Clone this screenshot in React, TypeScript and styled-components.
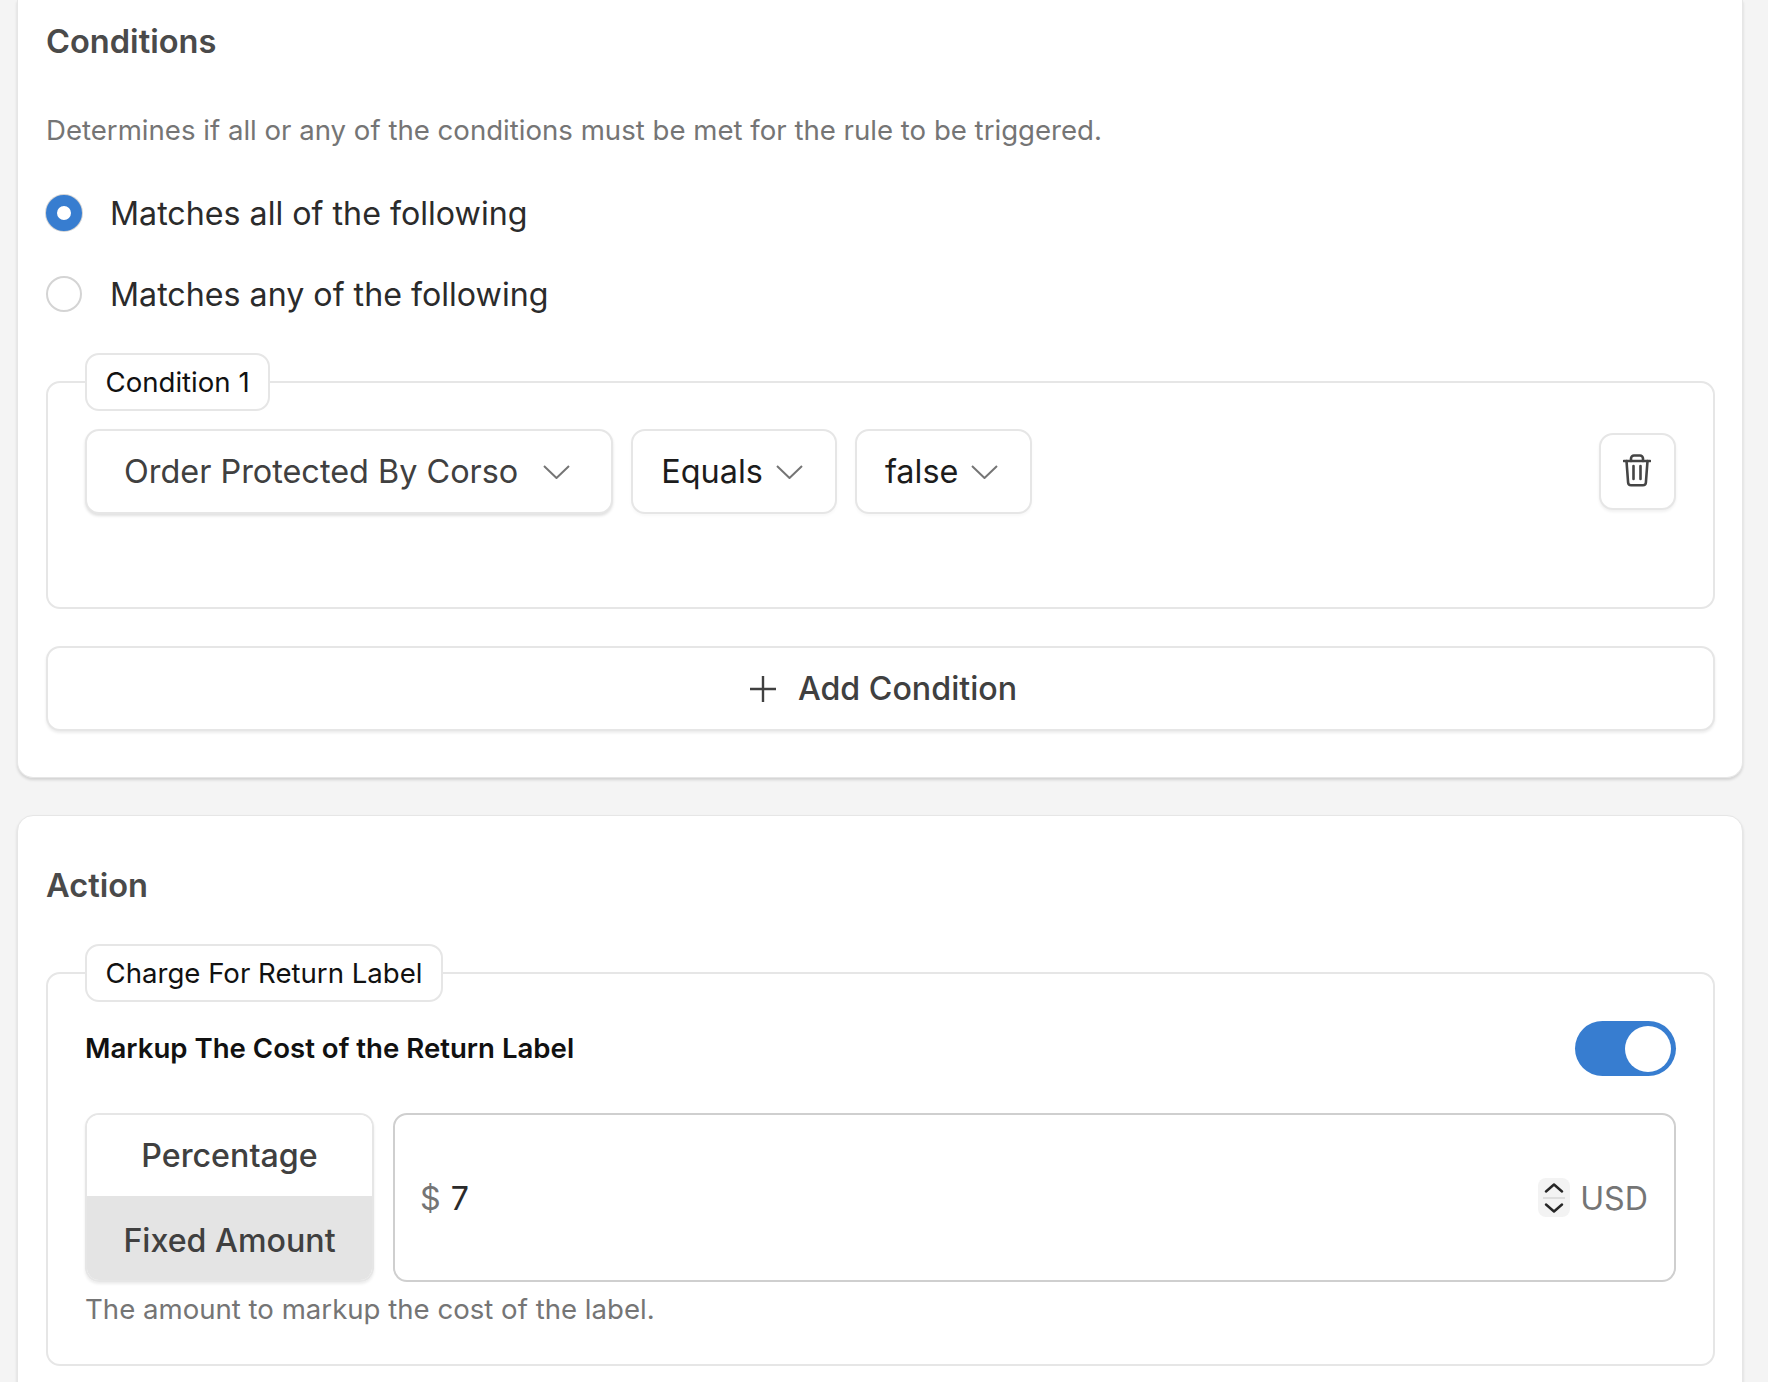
import React from "react";
import styled, { createGlobalStyle } from "styled-components";

const GlobalStyle = createGlobalStyle`
	html,
	body {
		margin: 0;
		height: 1382px;
		overflow: hidden;
		background: #f4f4f4;
		font-family: Inter, "Liberation Sans", sans-serif;
		-webkit-font-smoothing: antialiased;
	}
`;

const Page = styled.div`
	display: flex;
	flex-direction: column;
	gap: 37px;
	height: 1382px;
	padding: 0 25px 0 17px;
	box-sizing: border-box;
	overflow: hidden;
`;

const Card = styled.section<{ $cutTop?: boolean }>`
	flex: none;
	display: flex;
	flex-direction: column;
	padding: ${(p) => (p.$cutTop ? "17px" : "45px")} 27px 46px 28px;
	background: #fff;
	border: 1px solid #e6e6e6;
	border-top-width: ${(p) => (p.$cutTop ? 0 : "1px")};
	border-radius: ${(p) => (p.$cutTop ? "0 0 16px 16px" : "16px")};
	box-shadow: 0 2px 3px rgba(0, 0, 0, 0.14);
`;

const Heading = styled.h2`
	margin: 0;
	font-size: 32.6px;
	line-height: 48px;
	font-weight: 600;
	color: #4a4a4a;
`;

const Description = styled.p`
	margin: 45px 0 0;
	font-size: 27.6px;
	line-height: 40px;
	color: #757575;
`;

const RadioGroup = styled.div`
	display: flex;
	flex-direction: column;
	gap: 45px;
	margin: 45px 0 41px;
`;

const RadioRow = styled.label`
	display: flex;
	align-items: center;
	gap: 28px;
	height: 36px;
	font-size: 32.2px;
	color: #2b2b2b;
`;

const RadioDot = styled.span<{ $checked?: boolean }>`
	flex: none;
	width: 36px;
	height: 36px;
	box-sizing: border-box;
	border-radius: 50%;
	background: #fff;
	border: ${(p) => (p.$checked ? "11px solid #377dd0" : "2px solid #d4d4d4")};
	box-shadow: ${(p) => (p.$checked ? "0 0 0 1px #d4d4d4" : "none")};
`;

const Group = styled.fieldset<{ $bottom: number }>`
	margin: 0;
	padding: 0 37px ${(p) => p.$bottom}px 37px;
	min-width: 0;
	border: 2px solid #e6e6e6;
	border-radius: 14px;
`;

const GroupLegend = styled.legend`
	box-sizing: border-box;
	height: 58px;
	padding: 0 18.5px;
	background: #fff;
	border: 2px solid #e6e6e6;
	border-radius: 14px;
	font-size: 27.6px;
	line-height: 54px;
	color: #111;
`;

const ConditionRow = styled.div`
	display: flex;
	align-items: center;
	gap: 18px;
	margin-top: 18px;
`;

const SelectBox = styled.button<{ $wide?: boolean; $strong?: boolean }>`
	display: flex;
	align-items: center;
	gap: ${(p) => (p.$wide ? "25px" : "13px")};
	height: 85px;
	padding: 0 ${(p) => (p.$wide ? "41px" : "32px")} 0 ${(p) => (p.$wide ? "37px" : "28px")};
	background: #fff;
	border: 2px solid #e6e6e6;
	border-radius: 14px;
	box-shadow: 0 2px 3px rgba(0, 0, 0, ${(p) => (p.$wide ? 0.12 : 0.03)});
	font: inherit;
	font-size: 32.4px;
	color: ${(p) => (p.$strong ? "#1c1c1c" : "#404040")};
`;

const TrashButton = styled.button`
	display: flex;
	align-items: center;
	justify-content: center;
	width: 77px;
	height: 77px;
	margin-left: auto;
	padding: 0 2px 2px 0;
	background: #fff;
	border: 2px solid #e6e6e6;
	border-radius: 14px;
	box-shadow: 0 2px 3px rgba(0, 0, 0, 0.06);
`;

const AddButton = styled.button`
	display: flex;
	align-items: center;
	justify-content: center;
	gap: 22px;
	height: 85px;
	margin-top: 37px;
	padding: 0 0 0 6px;
	background: #fff;
	border: 2px solid #e6e6e6;
	border-radius: 14px;
	box-shadow: 0 2px 3px rgba(0, 0, 0, 0.08);
	font: inherit;
	font-size: 32.2px;
	font-weight: 500;
	color: #404040;
`;

const ActionHeading = styled(Heading)`
	margin-bottom: 35px;
`;

const ToggleRow = styled.div`
	display: flex;
	align-items: center;
	justify-content: space-between;
	margin-top: 19px;
`;

const ToggleLabel = styled.span`
	margin-top: -2px;
	font-size: 27.6px;
	font-weight: 600;
	color: #111;
`;

const Switch = styled.span`
	display: flex;
	justify-content: flex-end;
	align-items: center;
	box-sizing: border-box;
	width: 101px;
	height: 55px;
	padding-right: 5px;
	border-radius: 28px;
	background: #377dd0;

	&::after {
		content: "";
		width: 46px;
		height: 46px;
		border-radius: 50%;
		background: #fff;
	}
`;

const AmountRow = styled.div`
	display: flex;
	gap: 19px;
	margin-top: 37px;
`;

const Segments = styled.div`
	flex: none;
	display: flex;
	flex-direction: column;
	width: 289px;
	height: 169px;
	box-sizing: border-box;
	border: 2px solid #e6e6e6;
	border-radius: 14px;
	box-shadow: 0 2px 3px rgba(0, 0, 0, 0.08);
	overflow: hidden;
`;

const Segment = styled.div<{ $active?: boolean }>`
	flex: ${(p) => (p.$active ? "1" : "0 0 81px")};
	display: flex;
	align-items: center;
	justify-content: center;
	padding-top: ${(p) => (p.$active ? "4px" : "0")};
	background: ${(p) => (p.$active ? "#e4e4e4" : "#fff")};
	font-size: 32.2px;
	font-weight: 500;
	color: #404040;
`;

const AmountField = styled.div`
	flex: 1;
	display: flex;
	align-items: center;
	box-sizing: border-box;
	height: 169px;
	padding: 2px 26px 0 25px;
	border: 2px solid #cfcfcf;
	border-radius: 14px;
	font-size: 32.2px;
	color: #2b2b2b;
`;

const Affix = styled.span`
	color: #757575;
`;

const Prefix = styled(Affix)`
	margin-right: 10px;
`;

const Spinner = styled.span`
	display: flex;
	flex-direction: column;
	align-items: center;
	justify-content: center;
	width: 32px;
	height: 39px;
	margin: -2px 10px 0 auto;
	background: #f3f3f3;
	border-radius: 8px;
`;

const SpinnerLine = styled.span`
	flex: none;
	width: 22px;
	height: 2px;
	margin: 4px 0;
	background: #dedede;
`;

const HelpText = styled.p`
	margin: 7px 0 0;
	font-size: 27.6px;
	line-height: 40px;
	color: #757575;
`;

const Chevron = () => (
	<svg width="27" height="14" viewBox="0 0 27 14" fill="none" stroke="#757575" strokeWidth="2">
		<path d="M1 1l12.5 12L26 1" strokeLinejoin="round" />
	</svg>
);

const Trash = () => (
	<svg width="28" height="33" viewBox="0 0 28 33" fill="none" stroke="#454545" strokeWidth="2.6" strokeLinecap="round" strokeLinejoin="round">
		<path d="M1 7h26" />
		<path d="M8 7V4.5A3 3 0 0 1 11 1.5h6a3 3 0 0 1 3 3V7" />
		<path d="M3.5 7l1.6 21.5a3 3 0 0 0 3 2.8h11.8a3 3 0 0 0 3-2.8L24.5 7" />
		<path d="M10.5 12v13M17.5 12v13" />
	</svg>
);

const Plus = () => (
	<svg width="26" height="26" viewBox="0 0 26 26" fill="none" stroke="#404040" strokeWidth="2.4">
		<path d="M13 0v26M0 13h26" />
	</svg>
);

const SpinUp = () => (
	<svg width="20" height="10" viewBox="0 0 20 10" fill="none" stroke="#262626" strokeWidth="2.4" strokeLinecap="round" strokeLinejoin="round">
		<path d="M2 8.5l8-7 8 7" />
	</svg>
);

const SpinDown = () => (
	<svg width="20" height="10" viewBox="0 0 20 10" fill="none" stroke="#262626" strokeWidth="2.4" strokeLinecap="round" strokeLinejoin="round">
		<path d="M2 1.5l8 7 8-7" />
	</svg>
);

export default function App() {
	return (
		<Page>
			<GlobalStyle />
			<Card $cutTop>
				<Heading>Conditions</Heading>
				<Description>Determines if all or any of the conditions must be met for the rule to be triggered.</Description>
				<RadioGroup>
					<RadioRow>
						<RadioDot $checked />
						Matches all of the following
					</RadioRow>
					<RadioRow>
						<RadioDot />
						Matches any of the following
					</RadioRow>
				</RadioGroup>
				<Group $bottom={93}>
					<GroupLegend>Condition 1</GroupLegend>
					<ConditionRow>
						<SelectBox $wide>
							Order Protected By Corso
							<Chevron />
						</SelectBox>
						<SelectBox $strong>
							Equals
							<Chevron />
						</SelectBox>
						<SelectBox $strong>
							false
							<Chevron />
						</SelectBox>
						<TrashButton aria-label="Delete condition">
							<Trash />
						</TrashButton>
					</ConditionRow>
				</Group>
				<AddButton>
					<Plus />
					Add Condition
				</AddButton>
			</Card>
			<Card>
				<ActionHeading>Action</ActionHeading>
				<Group $bottom={35}>
					<GroupLegend>Charge For Return Label</GroupLegend>
					<ToggleRow>
						<ToggleLabel>Markup The Cost of the Return Label</ToggleLabel>
						<Switch />
					</ToggleRow>
					<AmountRow>
						<Segments>
							<Segment>Percentage</Segment>
							<Segment $active>Fixed Amount</Segment>
						</Segments>
						<AmountField>
							<Prefix>$</Prefix>7
							<Spinner>
								<SpinUp />
								<SpinnerLine />
								<SpinDown />
							</Spinner>
							<Affix>USD</Affix>
						</AmountField>
					</AmountRow>
					<HelpText>The amount to markup the cost of the label.</HelpText>
				</Group>
			</Card>
		</Page>
	);
}
